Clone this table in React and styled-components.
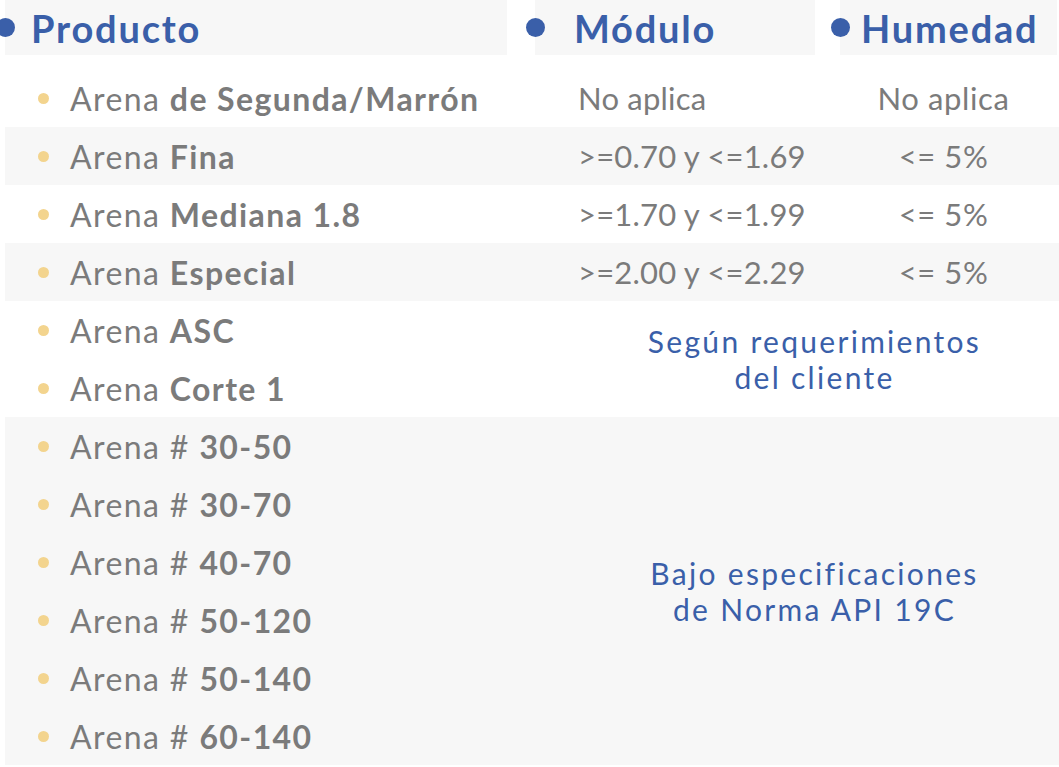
import React from 'react'
import styled, { createGlobalStyle } from 'styled-components'

const GlobalStyle = createGlobalStyle`
  html, body { margin: 0; padding: 0; background: #ffffff; }
  body { font-family: Lato, "Open Sans", "Liberation Sans", sans-serif; }
`

const blue = '#3a5fa9'
const grey = '#7b7b7b'
const band = '#f7f7f7'

const Page = styled.div`
  width: 1059px;
  padding-left: 5px;
  box-sizing: border-box;
`

const HeaderRow = styled.div`
  display: grid;
  grid-template-columns: 525px 310px 1fr;
  height: 55px;
  margin-bottom: 14px;
`

const HeaderCell = styled.div`
  display: flex;
  align-items: center;
  background: ${band};
  margin-left: ${(p) => p.$offset || 0}px;
  width: ${(p) => p.$width}px;
  height: 55px;
  font-size: 38px;
  font-weight: 700;
  color: ${blue};
  letter-spacing: 1.8px;

  &::before {
    content: '';
    flex: none;
    width: 19px;
    height: 19px;
    border-radius: 50%;
    background: ${blue};
    margin-left: -9px;
    margin-right: ${(p) => p.$gap}px;
  }
`

const Group = styled.div`
  display: grid;
  grid-template-columns: 525px 310px 1fr;
  grid-auto-rows: 58px;
  background: ${(p) => (p.$shaded ? band : 'transparent')};
`

const Product = styled.div`
  grid-column: 1;
  display: flex;
  align-items: center;
  padding-left: 33px;
  font-size: 32px;
  letter-spacing: 1.4px;
  color: ${grey};
  white-space: nowrap;

  &::before {
    content: '';
    flex: none;
    width: 11px;
    height: 11px;
    border-radius: 50%;
    background: #f3d48e;
    margin-right: 21px;
  }

  b { font-weight: 700; }
`

const Module = styled.div`
  display: flex;
  align-items: center;
  padding-left: 48px;
  font-size: 31px;
  letter-spacing: 0.2px;
  color: ${grey};
  white-space: nowrap;
`

const Moisture = styled.div`
  display: flex;
  align-items: center;
  justify-content: center;
  padding-right: 12px;
  font-size: 31px;
  letter-spacing: 0.6px;
  color: ${grey};
  white-space: nowrap;
`

const Merged = styled.div`
  grid-column: 2 / 4;
  grid-row: 1 / span ${(p) => p.$rows};
  display: flex;
  flex-direction: column;
  align-items: center;
  justify-content: center;
  text-align: center;
  padding-left: 40px;
  font-size: 30px;
  letter-spacing: 2.3px;
  line-height: 36px;
  color: ${blue};
`

const rows = [
  { name: 'de Segunda/Marrón', module: 'No aplica', moisture: 'No aplica' },
  { name: 'Fina', module: '>=0.70 y <=1.69', moisture: '<= 5%', shaded: true },
  { name: 'Mediana 1.8', module: '>=1.70 y <=1.99', moisture: '<= 5%' },
  { name: 'Especial', module: '>=2.00 y <=2.29', moisture: '<= 5%', shaded: true },
]

const clientRows = ['ASC', 'Corte 1']
const apiRows = ['# 30-50', '# 30-70', '# 40-70', '# 50-120', '# 50-140', '# 60-140']

const Name = ({ children }) => {
  const hash = children.startsWith('# ')
  return (
    <Product>
      <span>
        Arena {hash ? '# ' : ''}<b>{hash ? children.slice(2) : children}</b>
      </span>
    </Product>
  )
}

export default function App() {
  return (
    <Page>
      <GlobalStyle />
      <HeaderRow>
        <HeaderCell $width={502} $gap={16}>Producto</HeaderCell>
        <HeaderCell $width={280} $offset={5} $gap={29}>Módulo</HeaderCell>
        <HeaderCell $width={217} $gap={11}>Humedad</HeaderCell>
      </HeaderRow>

      {rows.map((r) => (
        <Group key={r.name} $shaded={r.shaded}>
          <Name>{r.name}</Name>
          <Module>{r.module}</Module>
          <Moisture>{r.moisture}</Moisture>
        </Group>
      ))}

      <Group>
        {clientRows.map((n) => (
          <Name key={n}>{n}</Name>
        ))}
        <Merged $rows={clientRows.length}>
          <span>Según requerimientos</span>
          <span>del cliente</span>
        </Merged>
      </Group>

      <Group $shaded>
        {apiRows.map((n) => (
          <Name key={n}>{n}</Name>
        ))}
        <Merged $rows={apiRows.length}>
          <span>Bajo especificaciones</span>
          <span>de Norma API 19C</span>
        </Merged>
      </Group>
    </Page>
  )
}
